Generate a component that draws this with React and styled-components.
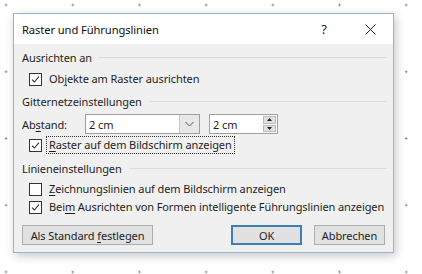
import React from 'react';
import styled, { createGlobalStyle } from 'styled-components';

const Global = createGlobalStyle`
  html, body {
    margin: 0;
    padding: 0;
    width: 422px;
    height: 274px;
    overflow: hidden;
    background-color: #fff;
    background-image: radial-gradient(circle, #8a8a8a 0.9px, transparent 1.3px);
    background-size: 66.7px 66.75px;
    background-position: -27.3px -28.4px;
    font-family: "Noto Sans", "Open Sans", sans-serif;
  }
`;

const Desk = styled.div`
  padding: 13px 0 0 13px;
`;

const Dialog = styled.div`
  width: 379px;
  height: 238px;
  border: 1px solid #9bb3cc;
  background: #f0f0f0;
  box-shadow: 2px 3px 9px rgba(0, 0, 0, 0.22);
  display: flex;
  flex-direction: column;
  font-size: 11px;
  letter-spacing: -0.1px;
  color: #1e1e1e;
  white-space: nowrap;
`;

const TitleBar = styled.div`
  height: 30px;
  background: #fff;
  display: flex;
  align-items: center;
  padding-left: 8px;
  font-size: 11.2px;
  color: #111;
`;

const TitleText = styled.div`
  flex: 1;
`;

const TitleBtn = styled.div`
  width: 46px;
  height: 30px;
  display: flex;
  align-items: center;
  justify-content: center;
  font-size: 13px;
  color: #222;
`;

const Body = styled.div`
  flex: 1;
  display: flex;
  flex-direction: column;
  padding: 3px 6px 0 8px;
`;

const GroupHead = styled.div`
  height: ${p => p.$h}px;
  display: flex;
  align-items: center;
  &::after {
    content: "";
    flex: 1;
    height: 1px;
    background: #dcdcdc;
    margin-left: 7px;
  }
`;

const Row = styled.div`
  height: ${p => p.$h}px;
  display: flex;
  align-items: center;
  padding-left: ${p => p.$indent || 0}px;
`;

const Box = styled.span`
  width: 11px;
  height: 11px;
  border: 1px solid #333;
  background: #fff;
  display: flex;
  align-items: center;
  justify-content: center;
  margin-right: 6px;
  flex-shrink: 0;
`;

const Label = styled.span`
  padding: 0 1px;
  outline: ${p => (p.$focus ? '1px dotted #333' : 'none')};
  outline-offset: 1px;
  line-height: 14px;
`;

const Key = styled.u`
  text-decoration-thickness: 1px;
  text-underline-offset: 2px;
`;

const FieldLabel = styled.span`
  width: 63px;
`;

const Field = styled.div`
  width: ${p => p.$w}px;
  height: 18px;
  border: 1px solid #a0a0a0;
  background: #fff;
  display: flex;
  align-items: stretch;
  margin-right: ${p => p.$mr || 0}px;
`;

const FieldValue = styled.span`
  flex: 1;
  padding-left: 3px;
  display: flex;
  align-items: center;
`;

const DropBtn = styled.span`
  width: 19px;
  background: #e8e8e8;
  border-left: 1px solid #c8c8c8;
  display: flex;
  align-items: center;
  justify-content: center;
`;

const Spin = styled.span`
  width: 13px;
  display: flex;
  flex-direction: column;
  margin: 1px;
  gap: 1px;
`;

const SpinHalf = styled.span`
  flex: 1;
  background: #e1e1e1;
  border: 1px solid #b9b9b9;
  display: flex;
  align-items: center;
  justify-content: center;
`;

const Buttons = styled.div`
  display: flex;
  align-items: center;
  margin-top: 8px;
  padding-right: 2px;
`;

const Button = styled.div`
  width: ${p => p.$w}px;
  height: 20px;
  box-sizing: border-box;
  background: #e1e1e1;
  border: ${p => (p.$primary ? '2px solid #3c7fb8' : '1px solid #adadad')};
  display: flex;
  align-items: center;
  justify-content: center;
  margin-left: ${p => p.$ml || 0}px;
  color: #1e1e1e;
`;

const Check = ({ on }) => (
  <Box>
    {on && (
      <svg width="9" height="9" viewBox="0 0 9 9">
        <path d="M1 4.6 L3.4 7 L8 1.6" fill="none" stroke="#333" strokeWidth="1.1" />
      </svg>
    )}
  </Box>
);

const CheckRow = ({ h, on, focus, children }) => (
  <Row $h={h} $indent={7}>
    <Check on={on} />
    <Label $focus={focus}>{children}</Label>
  </Row>
);

export default function App() {
  return (
    <>
      <Global />
      <Desk>
        <Dialog>
          <TitleBar>
            <TitleText>Raster und Führungslinien</TitleText>
            <TitleBtn>?</TitleBtn>
            <TitleBtn>
              <svg width="11" height="11" viewBox="0 0 11 11">
                <path d="M0.5 0.5 L10.5 10.5 M10.5 0.5 L0.5 10.5" stroke="#222" strokeWidth="1" />
              </svg>
            </TitleBtn>
          </TitleBar>
          <Body>
            <GroupHead $h={20}>Ausrichten an</GroupHead>
            <CheckRow h={24} on>
              Ob<Key>j</Key>ekte am Raster ausrichten
            </CheckRow>
            <GroupHead $h={20}>Gitternetzeinstellungen</GroupHead>
            <Row $h={22} style={{ marginTop: 2 }}>
              <FieldLabel>
                Ab<Key>s</Key>tand:
              </FieldLabel>
              <Field $w={113} $mr={9}>
                <FieldValue>2 cm</FieldValue>
                <DropBtn>
                  <svg width="9" height="6" viewBox="0 0 9 6">
                    <path d="M0.5 1 L4.5 5 L8.5 1" fill="none" stroke="#555" strokeWidth="1" />
                  </svg>
                </DropBtn>
              </Field>
              <Field $w={67}>
                <FieldValue>2 cm</FieldValue>
                <Spin>
                  <SpinHalf>
                    <svg width="5" height="3" viewBox="0 0 5 3">
                      <path d="M0 3 L2.5 0 L5 3 Z" fill="#222" />
                    </svg>
                  </SpinHalf>
                  <SpinHalf>
                    <svg width="5" height="3" viewBox="0 0 5 3">
                      <path d="M0 0 L2.5 3 L5 0 Z" fill="#222" />
                    </svg>
                  </SpinHalf>
                </Spin>
              </Field>
            </Row>
            <CheckRow h={20} on focus>
              <Key>R</Key>aster auf dem Bildschirm anzeigen
            </CheckRow>
            <GroupHead $h={26}>Linieneinstellungen</GroupHead>
            <CheckRow h={16}>
              <Key>Z</Key>eichnungslinien auf dem Bildschirm anzeigen
            </CheckRow>
            <CheckRow h={20} on>
              Bei<Key>m</Key> Ausrichten von Formen intelligente Führungslinien anzeigen
            </CheckRow>
            <Buttons>
              <Button $w={131}>
                Als Standard&nbsp;<Key>f</Key>estlegen
              </Button>
              <Button $w={71} $ml={78} $primary>
                OK
              </Button>
              <Button $w={71} $ml={12}>
                Abbrechen
              </Button>
            </Buttons>
          </Body>
        </Dialog>
      </Desk>
    </>
  );
}
